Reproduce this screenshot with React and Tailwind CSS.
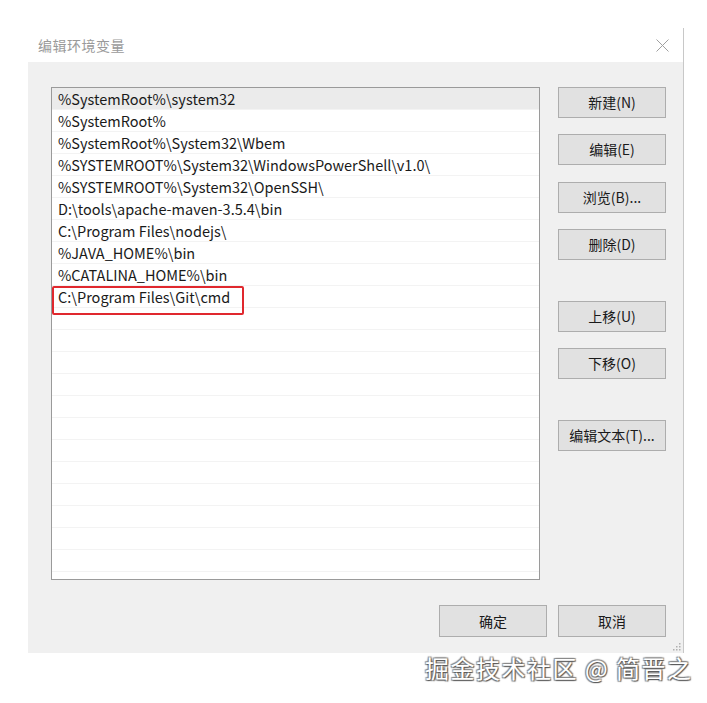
import React from "react";

const paths = [
  "%SystemRoot%\\system32",
  "%SystemRoot%",
  "%SystemRoot%\\System32\\Wbem",
  "%SYSTEMROOT%\\System32\\WindowsPowerShell\\v1.0\\",
  "%SYSTEMROOT%\\System32\\OpenSSH\\",
  "D:\\tools\\apache-maven-3.5.4\\bin",
  "C:\\Program Files\\nodejs\\",
  "%JAVA_HOME%\\bin",
  "%CATALINA_HOME%\\bin",
  "C:\\Program Files\\Git\\cmd",
];

const font = { fontFamily: '"Noto Sans CJK SC", "Noto Sans", sans-serif' };

function WinButton({ children, className = "" }) {
  return (
    <button
      className={
        "w-[108px] h-[31px] bg-[#e1e1e1] border border-[#adadad] text-[14px] text-[#1a1a1a] flex items-center justify-center " +
        className
      }
    >
      {children}
    </button>
  );
}

export default function App() {
  const rows = [...paths, ...Array(13).fill("")];

  return (
    <div className="w-[707px] h-[703px] bg-white relative overflow-hidden" style={font}>
      <div className="ml-[28px] mt-[28px] w-[656px] border-r border-[#c8c8c8]">
        {/* title bar */}
        <div className="h-[34px] flex items-center justify-between pl-[10px] pr-[14px]">
          <span className="text-[14px] text-[#9a9a9a] tracking-[0.5px]">编辑环境变量</span>
          <svg width="13" height="13" viewBox="0 0 13 13">
            <path d="M0.5 0.5L12.5 12.5M12.5 0.5L0.5 12.5" stroke="#a0a0a0" strokeWidth="1" />
          </svg>
        </div>

        {/* body */}
        <div className="bg-[#f0f0f0] h-[591px] relative pl-[23px] pt-[25px]">
          <div className="flex">
            <div className="w-[489px] h-[493px] bg-white border border-[#9a9a9a] overflow-hidden relative">
              {rows.map((p, i) => (
                <div
                  key={i}
                  className={
                    "h-[22px] flex items-center pl-[6px] text-[14.5px] text-[#1a1a1a] whitespace-nowrap border-b border-[#f3f3f3] " +
                    (i === 0 ? "bg-[#ebebeb]" : "")
                  }
                >
                  {p}
                </div>
              ))}
              <div className="absolute left-0 top-[198px] w-[192px] h-[29px] border-2 border-[#e0282e] rounded-[2px]" />
            </div>

            <div className="ml-[18px] flex flex-col">
              <WinButton>新建(N)</WinButton>
              <WinButton className="mt-[16px]">编辑(E)</WinButton>
              <WinButton className="mt-[17px]">浏览(B)...</WinButton>
              <WinButton className="mt-[16px]">删除(D)</WinButton>
              <WinButton className="mt-[41px]">上移(U)</WinButton>
              <WinButton className="mt-[16px]">下移(O)</WinButton>
              <WinButton className="mt-[41px]">编辑文本(T)...</WinButton>
            </div>
          </div>

          <div className="flex justify-end gap-[11px] mt-[25px] pr-[17px]">
            <WinButton className="h-[32px]">确定</WinButton>
            <WinButton className="h-[32px]">取消</WinButton>
          </div>

          {/* resize grip */}
          <svg className="absolute right-[2px] bottom-[2px]" width="10" height="10" viewBox="0 0 10 10">
            {[
              [8, 2],
              [8, 5],
              [5, 5],
              [8, 8],
              [5, 8],
              [2, 8],
            ].map(([x, y], i) => (
              <rect key={i} x={x} y={y} width="1.5" height="1.5" fill="#b0b0b0" />
            ))}
          </svg>
        </div>
      </div>

      {/* watermark */}
      <div
        className="absolute left-[425px] top-[650px] text-[24px] text-white tracking-[1.5px] whitespace-nowrap [text-shadow:1px_1px_1px_#555,-1px_-1px_1px_#888,1px_-1px_1px_#888,-1px_1px_1px_#888]"
      >
        掘金技术社区 @ 简晋之
      </div>
    </div>
  );
}
